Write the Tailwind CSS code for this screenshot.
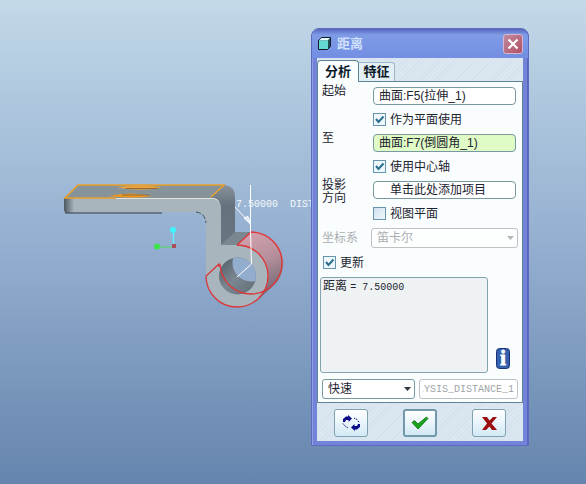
<!DOCTYPE html>
<html lang="zh-CN">
<head>
    <meta charset="UTF-8">
    <meta name="viewport" content="width=device-width, initial-scale=1.0">
    <title>距离</title>

    <!-- Tailwind css -->
    <script src="https://cdn.jsdelivr.net/npm/@tailwindcss/browser@4"></script>
</head>
<body class="relative min-h-screen overflow-hidden bg-linear-to-b from-[#c2d9e8] via-[#94afd0] to-[#6685ae] font-['Liberation_Sans','Noto_Sans_CJK_SC',sans-serif] text-xs text-[#1c2430]">

    <!-- Model view -->
    <main>
        <svg class="block" width="320" height="320" viewBox="0 0 320 320" fill="none">
            <defs>
                <linearGradient id="edge" x1="64" x2="74" y1="0" y2="0" gradientUnits="userSpaceOnUse">
                    <stop offset="0" stop-color="#4c565e"/><stop offset="1" stop-color="#a8b5bd"/>
                </linearGradient>
                <linearGradient id="bend" x1="0" x2="0" y1="185" y2="245" gradientUnits="userSpaceOnUse">
                    <stop offset="0" stop-color="#87929b"/><stop offset=".35" stop-color="#65717c"/><stop offset="1" stop-color="#697580"/>
                </linearGradient>
                <linearGradient id="barrel" x1="245" x2="272" y1="235" y2="290" gradientUnits="userSpaceOnUse">
                    <stop offset="0" stop-color="#d1a1ad"/><stop offset=".5" stop-color="#b78f9c"/><stop offset="1" stop-color="#766c78"/>
                </linearGradient>
                <linearGradient id="bore" x1="220" x2="250" y1="262" y2="294" gradientUnits="userSpaceOnUse">
                    <stop offset="0" stop-color="#56626b"/><stop offset=".5" stop-color="#7b8790"/><stop offset="1" stop-color="#63707a"/>
                </linearGradient>
                <clipPath id="front-hole"><circle cx="237.500" cy="276" r="18.500"/></clipPath>
            </defs>

            <!-- plate -->
            <path d="M64 198 78 185H224L211 198Z" fill="#87939b"/>
            <path d="M211 198 224 185Q235 186 235 197V233L221 245V208Q220 198 211 198Z" fill="url(#bend)"/>
            <path d="M221 245 235 232H251L237 245Z" fill="#7b8790"/>

            <!-- barrel -->
            <path d="M237 245 251 232A31 31 0 0 1 273 286L259 299Z" fill="url(#barrel)"/>
            <path d="M64 198H211Q220 198 221 208V245H237A31 31 0 1 1 206 276V222Q205 212 197 212H66Q64 212 64 210Z" fill="#a8b5bd"/>
            <path d="M64 198H76V213H66Q64 212 64 210Z" fill="url(#edge)"/>
            <circle cx="237.500" cy="276" r="18.500" fill="url(#bore)"/>
            <circle cx="251" cy="263" r="18.500" fill="#93adcf" clip-path="url(#front-hole)"/>
            <path d="M65 213H162" stroke="#343d44"/>
            <path d="M196 212Q205 213 206 223" stroke="#46515a" stroke-dasharray="5 2"/>

            <!-- highlighted surfaces -->
            <path d="M116 198H65L78 185H224L211 197" stroke="#e9a02b" stroke-width="1.500"/>
            <path d="M116 198.500H211Q217 198 219 202" stroke="#e3e4d8"/>
            <path d="M117 187.500Q139 183 162 187.500 140 192 117 187.500Z" fill="#e8a43c"/>
            <path d="M126 188.500H158" stroke="#966b36"/>
            <path d="M109 196Q130 191 152 196 132 199 109 196Z" fill="#f0981d"/>
            <path d="M122 195H150" stroke="#8b6a40"/>
            <g stroke="#dc3639" stroke-width="1.300">
                <path d="M237 245 251 232A31 31 0 1 1 220 264"/>
                <path d="M237 245A31 31 0 1 1 206 276L219 264V267"/>
            </g>

            <!-- dimension -->
            <g stroke="#fff">
                <path d="M250.500 185V232L251.500 264 237 277"/>
                <path d="M235 207 250 223"/>
            </g>
            <path d="M244 218 248 216.500 250.500 224Z" fill="#dfe8f2" stroke="#fff"/>
            <text x="236" y="207" xml:space="preserve" fill="#f4f8fb" class="font-['Liberation_Mono',monospace] text-[10px]">7.50000  DIST</text>

            <!-- axes -->
            <path d="M173.500 232V245" stroke="#64efff" stroke-width="1.500"/>
            <circle cx="173" cy="230" r="3" fill="#40f4ff"/>
            <path d="M158 247H172" stroke="#4ddb61"/>
            <circle cx="157" cy="246.500" r="3" fill="#3ce64a"/>
            <path d="M172 244H176V248H172Z" fill="#a94c5c"/>
        </svg>
    </main>

    <!-- Distance window -->
    <form class="absolute left-[311px] top-[28px] w-[218px] rounded-t-lg border border-[#5f69bd] bg-[#7383d8] px-[5px] pb-1 shadow-[inset_1px_0_#8e9de6,inset_-1px_0_#5866bd]">
        <header class="-mx-[5px] flex h-[29px] items-center rounded-t-lg bg-linear-to-b from-[#5666bd] via-[#7f9be6] via-20% to-[#738ee2] pl-1.5 pr-[5px]">
            <svg class="mr-1.5" width="13" height="13" viewBox="0 0 13 13">
                <path d="M.5 3.500 3.500.500H12.500V9.500L9.500 12.500H.5Z" fill="#1d4f54" stroke="#111c2b"/>
                <path d="M1 3.500 3.500 1H12L9.500 3.500Z" fill="#e8ffff"/>
                <path d="M1 3.500H10V12H1Z" fill="#66d8d4"/>
            </svg>
            <h1 class="grow text-[13px] font-bold text-[#cfe0fb]">距离</h1>
            <button type="button" aria-label="关闭" class="flex size-5 items-center justify-center rounded-[3px] border border-[#d9b5cf] bg-linear-to-br from-[#c08a9e] to-[#b05065]">
                <svg width="12" height="12" viewBox="0 0 12 12"><path d="M1.500 1.500 10.500 10.500M10.500 1.500 1.500 10.500" stroke="#fff" stroke-width="2.200"/></svg>
            </button>
        </header>

        <div class="bg-[#dce8f1] bg-[repeating-linear-gradient(135deg,#dce8f1_0px,#dce8f1_2px,#d5e2ed_2px,#d5e2ed_3px)] pt-0.5">
            <nav class="flex items-end text-[13px] font-bold text-[#0c1a28]">
                <button type="button" class="relative z-10 -mb-px h-[22px] w-[42px] rounded-t-[4px] border border-b-0 border-[#5d8594] bg-[#fafdfe]">分析</button>
                <button type="button" class="h-[19px] w-9 rounded-tr-[3px] border border-b-0 border-l-0 border-[#9db8c4] bg-[#e4eef5]">特征</button>
            </nav>

            <section class="border border-[#5d8594] bg-[#fafdfe] pb-[3px]">
                <div class="grid grid-cols-[51px_1fr] pl-1 pr-1.5 pt-[5px]">
                    <label for="from" class="-mt-0.5 leading-[13px]">起始</label>
                    <input id="from" type="text" readonly value="曲面:F5(拉伸_1)" class="h-[18px] w-full rounded-[4px] border border-[#7899a2] bg-white px-[5px] pb-1">

                    <label class="col-start-2 flex h-[29px] items-center gap-1">
                        <span class="grid">
                            <input type="checkbox" checked class="peer col-start-1 row-start-1 size-[13px] appearance-none border border-[#6795ad] bg-[#eef7fb]">
                            <svg class="invisible col-start-1 row-start-1 peer-checked:visible" width="13" height="13" viewBox="0 0 13 13" fill="none"><path d="M3 6 5.500 9 10.500 3.500" stroke="#2c6f8e" stroke-width="2"/></svg>
                        </span>
                        作为平面使用
                    </label>

                    <label for="to" class="-mt-0.5 leading-[13px]">至</label>
                    <input id="to" type="text" readonly value="曲面:F7(倒圆角_1)" class="h-[18px] w-full rounded-[4px] border border-[#7899a2] bg-[#e0fbc5] px-[5px] pb-1">

                    <label class="col-start-2 flex h-[29px] items-center gap-1">
                        <span class="grid">
                            <input type="checkbox" checked class="peer col-start-1 row-start-1 size-[13px] appearance-none border border-[#6795ad] bg-[#eef7fb]">
                            <svg class="invisible col-start-1 row-start-1 peer-checked:visible" width="13" height="13" viewBox="0 0 13 13" fill="none"><path d="M3 6 5.500 9 10.500 3.500" stroke="#2c6f8e" stroke-width="2"/></svg>
                        </span>
                        使用中心轴
                    </label>

                    <label for="direction" class="-mt-0.5 h-5 leading-[13px]">投影<br>方向</label>
                    <input id="direction" type="text" readonly value="单击此处添加项目" class="h-[18px] w-full rounded-[4px] border border-[#7899a2] bg-white px-4 pb-1">

                    <label class="col-start-2 flex h-[29px] items-center gap-1">
                        <span class="grid">
                            <input type="checkbox" class="peer col-start-1 row-start-1 size-[13px] appearance-none border border-[#6795ad] bg-linear-to-br from-[#cfe0ef] to-[#f2f8fc]">
                            <svg class="invisible col-start-1 row-start-1 peer-checked:visible" width="13" height="13" viewBox="0 0 13 13" fill="none"><path d="M3 6 5.500 9 10.500 3.500" stroke="#2c6f8e" stroke-width="2"/></svg>
                        </span>
                        视图平面
                    </label>

                    <label for="csys" class="self-center leading-3 text-[#a9adb0]">坐标系</label>
                    <div class="relative -mx-0.5">
                        <select id="csys" disabled class="block h-5 w-full appearance-none rounded-[3px] border border-[#bcc2c5] bg-[#fdfefe] px-[5px] text-[#a9adb0]">
                            <option>笛卡尔</option>
                        </select>
                        <svg class="pointer-events-none absolute right-1 top-2" width="7" height="4" viewBox="0 0 7 4"><path d="M0 0H7L3.500 4Z" fill="#b3b7ba"/></svg>
                    </div>

                    <label class="col-span-2 flex h-[29px] items-center gap-1 pl-px">
                        <span class="grid">
                            <input type="checkbox" checked class="peer col-start-1 row-start-1 size-[13px] appearance-none border border-[#6795ad] bg-[#eef7fb]">
                            <svg class="invisible col-start-1 row-start-1 peer-checked:visible" width="13" height="13" viewBox="0 0 13 13" fill="none"><path d="M3 6 5.500 9 10.500 3.500" stroke="#2c6f8e" stroke-width="2"/></svg>
                        </span>
                        更新
                    </label>
                </div>

                <div class="flex items-end gap-2 pl-0.5 pr-3">
                    <output class="h-24 grow rounded-[3px] border border-[#84a5ae] bg-[#eff2f3] px-0.5">距离 <span class="font-['Liberation_Mono',monospace] text-[10px]">= 7.50000</span></output>
                    <button type="button" aria-label="信息" class="mb-1">
                        <svg class="block" width="14" height="21" viewBox="0 0 14 21">
                            <rect x=".5" y=".5" width="13" height="20" rx="3" fill="#3560ad" stroke="#183177"/>
                            <text x="7" y="17" text-anchor="middle" fill="#fff" stroke="#fff" class="font-['Liberation_Serif',serif] text-[20px] font-bold">i</text>
                        </svg>
                    </button>
                </div>

                <div class="mt-1.5 flex gap-1 px-1">
                    <div class="relative w-[93px] shrink-0">
                        <select aria-label="分析类型" class="block h-5 w-full appearance-none rounded-[3px] border border-[#7899a2] bg-white px-[5px]">
                            <option>快速</option>
                        </select>
                        <svg class="pointer-events-none absolute right-1 top-2" width="7" height="4" viewBox="0 0 7 4"><path d="M0 0H7L3.500 4Z" fill="#2e3940"/></svg>
                    </div>
                    <!-- rtl keeps the end of a long name in view -->
                    <input type="text" dir="rtl" disabled aria-label="名称" value="ANALYSIS_DISTANCE_1" class="h-5 w-full min-w-0 rounded-[3px] border border-[#bcc2c5] bg-white px-[3px] font-['Liberation_Mono',monospace] text-[10px] text-[#a0a4a7]">
                </div>
            </section>

            <footer class="flex justify-between px-[17px] pb-1 pt-1.5">
                <button type="button" aria-label="重复" class="flex h-7 w-[34px] items-center justify-center rounded-[3px] border border-[#7ea2af] bg-linear-to-b from-white to-[#d3e9f5]">
                    <svg width="19" height="16" viewBox="0 0 19 16" fill="#0b0b88">
                        <path d="M1 7V4L4 1.500H6V0L10 3.500 6.500 7V5H4L3 7Z"/>
                        <path d="M18 9V12L15 14.500H13V16L9 12.500 12.500 9V11H15L16 9Z"/>
                        <path d="M1 8.500 3 11 6 13M12 3 15 4.500 17.500 8" fill="none" stroke="#0b0b88" stroke-dasharray="1.500 1"/>
                    </svg>
                </button>
                <button type="submit" aria-label="确定" class="flex h-7 w-[34px] items-center justify-center rounded-[3px] border-2 border-[#7398aa] bg-linear-to-b from-white to-[#d3e9f5]">
                    <svg width="18" height="14" viewBox="0 0 18 14"><path d="M1 6.500 3.500 4.500 7 8 15.500 1 17 2.500 7 13Z" fill="#1ba51c" stroke="#0a6d10" stroke-width=".8"/></svg>
                </button>
                <button type="button" aria-label="取消" class="flex h-7 w-[34px] items-center justify-center rounded-[3px] border border-[#7ea2af] bg-linear-to-b from-white to-[#d3e9f5]">
                    <svg width="17" height="15" viewBox="0 0 17 15"><path d="M1 1H6L8.500 4.500 12 1H16L10.500 7.500 16 14H11L8.500 10.500 5 14H1L6 7.500Z" fill="#9c0d10"/></svg>
                </button>
            </footer>
        </div>
    </form>
</body>
</html>
